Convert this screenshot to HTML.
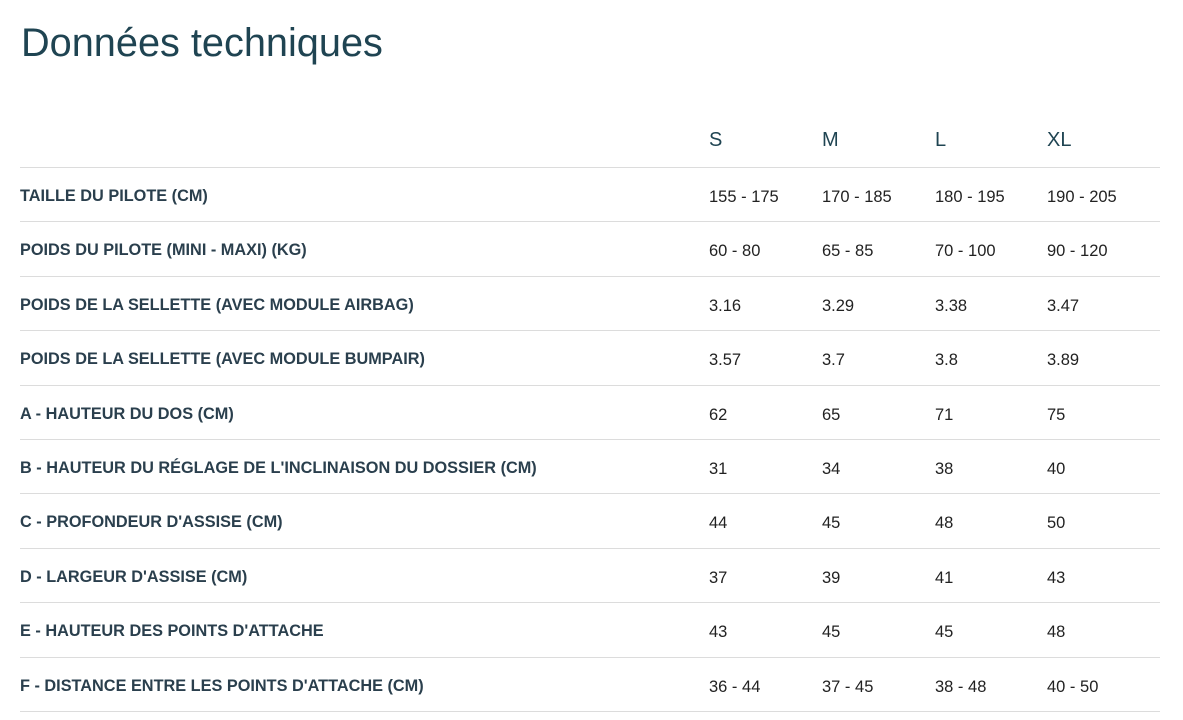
<!DOCTYPE html>
<html><head><meta charset="utf-8"><style>
body{margin:0;background:#fff;font-family:"Liberation Sans",sans-serif;}
h1{position:absolute;left:21px;top:20px;margin:0;font-size:39.7px;font-weight:normal;color:#1f4452;line-height:46px;}
.hdr{position:absolute;top:129px;font-size:20px;color:#1f4452;}
.line{position:absolute;left:20px;width:1140px;height:1px;background:#dcdcdc;}
.lbl{position:absolute;left:20px;font-size:16.3px;font-weight:bold;color:#2a3f4d;white-space:nowrap;}
.v{position:absolute;font-size:16.5px;color:#222;}
</style></head><body>
<h1>Données techniques</h1>
<div class="hdr" style="left:709px">S</div>
<div class="hdr" style="left:822px">M</div>
<div class="hdr" style="left:935px">L</div>
<div class="hdr" style="left:1047px">XL</div>
<div id="t"></div>
<script>
var rows=[["TAILLE DU PILOTE (CM)","155 - 175","170 - 185","180 - 195","190 - 205"],
["POIDS DU PILOTE (MINI - MAXI) (KG)","60 - 80","65 - 85","70 - 100","90 - 120"],
["POIDS DE LA SELLETTE (AVEC MODULE AIRBAG)","3.16","3.29","3.38","3.47"],
["POIDS DE LA SELLETTE (AVEC MODULE BUMPAIR)","3.57","3.7","3.8","3.89"],
["A - HAUTEUR DU DOS (CM)","62","65","71","75"],
["B - HAUTEUR DU RÉGLAGE DE L'INCLINAISON DU DOSSIER (CM)","31","34","38","40"],
["C - PROFONDEUR D'ASSISE (CM)","44","45","48","50"],
["D - LARGEUR D'ASSISE (CM)","37","39","41","43"],
["E - HAUTEUR DES POINTS D'ATTACHE","43","45","45","48"],
["F - DISTANCE ENTRE LES POINTS D'ATTACHE (CM)","36 - 44","37 - 45","38 - 48","40 - 50"]];
var xs=[709,822,935,1047],h='';
h+='<div class="line" style="top:167px"></div>';
rows.forEach(function(r,i){var top=167+i*54.4;var y=Math.round(top+20);
h+='<div class="lbl" style="top:'+y+'px">'+r[0]+'</div>';
for(var j=0;j<4;j++)h+='<div class="v" style="left:'+xs[j]+'px;top:'+(y+1)+'px">'+r[j+1]+'</div>';
h+='<div class="line" style="top:'+Math.round(top+54.4)+'px"></div>';});
document.getElementById('t').innerHTML=h;
</script>
</body></html>
